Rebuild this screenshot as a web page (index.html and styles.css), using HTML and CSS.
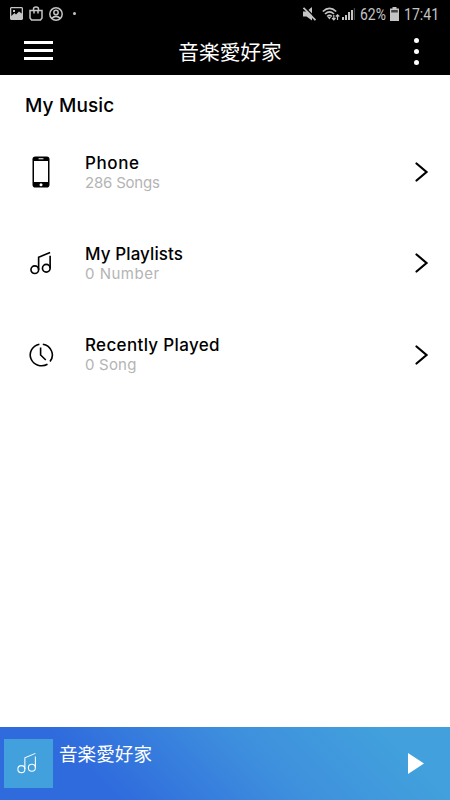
FILE: index.html
```
<!DOCTYPE html>
<html lang="en">

<head>
    <meta charset="utf-8">
    <title>音楽愛好家</title>
    <link rel="stylesheet" href="styles.css">
</head>

<body>
    <svg class="sprite">
        <symbol id="notes" viewBox="0 0 24 24">
            <circle cx="5" cy="19" r="4" />
            <circle cx="17" cy="17.5" r="4" />
            <path d="M9 19V6L21 1M21 4.5V17.5" />
        </symbol>
        <symbol id="chevron" viewBox="0 0 14 20">
            <path d="M1.5 1.5L11.5 10L1.5 18.5" />
        </symbol>
    </svg>

    <div class="status-bar">
        <div class="status-left">
            <svg width="13" height="13" viewBox="0 0 13 13">
                <path fill="currentColor" fill-rule="evenodd" d="M1 0H12L13 1V12L12 13H1L0 12V1ZM1.300 1.300V9L4.500 6L6 7.500L9 4.500L11.700 6.500V1.300ZM3 3H5V5H3Z" />
            </svg>
            <svg width="14" height="15" viewBox="0 0 14 15" fill="none" stroke="currentColor" stroke-width="1.5">
                <path d="M1 4.500H4.500V3Q4.500 1 7 1T9.500 3V4.500H13V12L11.500 14H2.500L1 12ZM5 7.500V4.500H9V7.500" />
            </svg>
            <svg width="14" height="14" viewBox="0 0 14 14" fill="none" stroke="currentColor" stroke-width="1.5">
                <circle cx="7" cy="7" r="6.200" />
                <circle cx="7" cy="5.500" r="2.200" />
                <path d="M2.800 11.300Q7 7.500 11.200 11.300" />
            </svg>
            <span class="dot"></span>
        </div>
        <div class="status-right">
            <svg class="mute" width="13" height="14" viewBox="0 0 13 14">
                <path fill="currentColor" d="M0 4.500H3.500L9 0V13.500L3.500 9.500H0Z" />
                <path stroke="#000" stroke-width="1.300" d="M1.800 0L13 11.500" />
                <path stroke="currentColor" stroke-width="1.800" d="M.5 .8L12.500 13.200" />
            </svg>
            <svg class="wifi" width="18" height="14" viewBox="0 0 18 14" fill="none" stroke="currentColor">
                <path stroke-width="1.700" d="M.8 4.500Q7.500-1.800 14.200 4.500M3 7Q7.500 2.800 12 7M5.200 9.500Q7.500 7.200 9.800 9.500" />
                <path fill="currentColor" stroke="none" d="M5.500 10H9L7.500 12.500Z" />
                <path stroke-width="1.200" d="M11.800 8V12.500M10 11L11.800 12.800L13.500 11M15.500 13V8M13.800 9.500L15.500 7.800L17.300 9.500" />
            </svg>
            <svg class="signal" width="13" height="12" viewBox="0 0 13 12" fill="currentColor">
                <path d="M0 9H2V12H0ZM3 7H5V12H3ZM6 4H8V12H6ZM9 2H11V12H9Z" />
                <path opacity=".35" d="M11.800 0H13V12H11.800Z" />
            </svg>
            <span class="percent">62%</span>
            <svg class="battery" width="9" height="14" viewBox="0 0 9 14" fill="currentColor">
                <path d="M2.500 0H6.500V1.500H9V14H0V1.500H2.500Z" />
                <path fill="#444" d="M1.200 3H7.800V5.500H1.200Z" />
            </svg>
            <span class="time">17:41</span>
        </div>
    </div>

    <header>
        <div class="menu"><span></span><span></span><span></span></div>
        <h1>音楽愛好家</h1>
        <div class="more"><span></span><span></span><span></span></div>
    </header>

    <main>
        <h2>My Music</h2>
        <div class="row">
            <div class="row-icon">
                <svg width="18" height="32" viewBox="0 0 18 32">
                    <rect x=".5" y=".5" width="17" height="31" rx="2.800" />
                    <path fill="#fff" d="M2 5H16V26H2Z" />
                    <path stroke="#fff" stroke-width="1.100" stroke-linecap="round" d="M7 2.800H11" />
                    <circle cx="9" cy="28.800" r="1.500" fill="#fff" />
                </svg>
            </div>
            <div class="row-text">
                <div class="name phone">Phone</div>
                <div class="count songs">286 Songs</div>
            </div>
            <svg class="chevron"><use href="#chevron" /></svg>
        </div>
        <div class="row">
            <div class="row-icon"><svg class="notes"><use href="#notes" /></svg></div>
            <div class="row-text">
                <div class="name playlists">My Playlists</div>
                <div class="count number">0 Number</div>
            </div>
            <svg class="chevron"><use href="#chevron" /></svg>
        </div>
        <div class="row">
            <div class="row-icon">
                <svg class="clock" width="26" height="24" viewBox="0 0 26 24">
                    <path d="M11.400 1.200A11.500 10.900 0 1 0 19.500 21.300M14.800 1.200A11.500 10.900 0 0 1 22 18.500M12.600 4.500V12L17.800 17" />
                </svg>
            </div>
            <div class="row-text">
                <div class="name recent">Recently Played</div>
                <div class="count song">0 Song</div>
            </div>
            <svg class="chevron"><use href="#chevron" /></svg>
        </div>
    </main>

    <footer>
        <div class="cover"><svg class="notes"><use href="#notes" /></svg></div>
        <div class="track">音楽愛好家</div>
        <svg class="play" width="16" height="21" viewBox="0 0 16 21">
            <path fill="#fff" d="M0 0L16 10.500L0 21Z" />
        </svg>
    </footer>
</body>

</html>
```
FILE: styles.css
```
* {
    box-sizing: border-box;
}

body {
    margin: 0;
    height: 800px;
    display: flex;
    flex-direction: column;
    overflow: hidden;
    background: #fff;
    color: #000;
    font-family: Inter, "Noto Sans CJK JP", sans-serif;
}

svg {
    display: block;
    flex-shrink: 0;
}

.sprite {
    display: none;
}

.status-bar {
    height: 27px;
    flex-shrink: 0;
    display: flex;
    justify-content: space-between;
    align-items: center;
    padding: 0 12px 0 10px;
    background: #000;
    color: #c4c4c4;
    font: 16px/27px Roboto, sans-serif;
}

.status-left,
.status-right {
    display: flex;
    align-items: center;
}

.status-left {
    gap: 6px;
}

.dot {
    width: 3px;
    height: 3px;
    margin-left: 4px;
    border-radius: 50%;
    background: #c4c4c4;
}

.wifi {
    margin-left: 6px;
}

.signal {
    margin-left: 2px;
}

.percent {
    width: 26px;
    height: 27px;
    margin-left: 5px;
    padding-top: 1px;
    transform: scaleX(0.87);
    transform-origin: left;
}

.battery {
    margin: 0 5px 0 4px;
}

.time {
    width: 34px;
    height: 27px;
    padding-top: 1px;
    transform: scaleX(0.88);
    transform-origin: left;
}

header {
    height: 48px;
    flex-shrink: 0;
    display: flex;
    justify-content: space-between;
    align-items: center;
    padding: 0 31px 0 24px;
    background: #000;
}

.menu {
    width: 29px;
    height: 19px;
    margin-top: -2px;
    display: flex;
    flex-direction: column;
    justify-content: space-between;
}

.menu span {
    height: 3px;
    background: #fff;
}

h1 {
    margin: 3px 7px 0 0;
    color: #fff;
    font-size: 20.7px;
    font-weight: 400;
    line-height: 45px;
}

.more {
    display: flex;
    flex-direction: column;
    gap: 6px;
}

.more span {
    width: 5px;
    height: 5px;
    border-radius: 50%;
    background: #fff;
}

main {
    flex: 1;
    padding: 19px 21px 0 25px;
}

h2 {
    margin: 0;
    font-size: 19px;
    font-weight: 500;
    line-height: 24px;
    letter-spacing: 0.15px;
}

.row {
    height: 52px;
    margin-top: 39.4px;
    display: flex;
    align-items: center;
}

h2 + .row {
    margin-top: 28px;
}

.row-icon {
    width: 33px;
    display: flex;
    justify-content: center;
}

.row-text {
    flex: 1;
    margin-left: 27px;
}

.name {
    font-size: 17px;
    font-weight: 500;
    line-height: 20px;
}

.phone {
    letter-spacing: 0.6px;
}

.playlists {
    letter-spacing: 0.1px;
}

.recent {
    letter-spacing: 0.34px;
}

.count {
    color: #b4b4b4;
    font-size: 15px;
    line-height: 19px;
}

.songs {
    letter-spacing: -0.2px;
}

.number {
    letter-spacing: 0.5px;
}

.song {
    letter-spacing: 0.2px;
}

.row-icon svg {
    margin-right: 1px;
}

.notes {
    width: 23px;
    height: 24px;
    fill: none;
    stroke: #000;
    stroke-width: 1.7;
}

.row-icon .clock {
    margin-right: 2px;
    fill: none;
    stroke: #000;
    stroke-width: 1.6;
}

.chevron {
    width: 14px;
    height: 20px;
    fill: none;
    stroke: #000;
    stroke-width: 2.2;
    stroke-linecap: round;
}

footer {
    height: 73px;
    flex-shrink: 0;
    display: flex;
    align-items: center;
    padding: 0 26px 0 4px;
    background: linear-gradient(45deg, #2f6bdd 0%, #2f6bdd 23%, #3e90dd 58%, #42a1dc 88%);
}

.cover {
    width: 49px;
    height: 49px;
    display: flex;
    align-items: center;
    justify-content: center;
    background: #42a1dc;
}

.cover .notes {
    width: 21px;
    height: 22px;
    margin-right: 2px;
    margin-bottom: 2px;
    stroke: #fff;
    stroke-width: 1.2;
}

.track {
    flex: 1;
    align-self: flex-start;
    margin-left: 6px;
    color: #fff;
    font-size: 18.6px;
    line-height: 54px;
}
```
